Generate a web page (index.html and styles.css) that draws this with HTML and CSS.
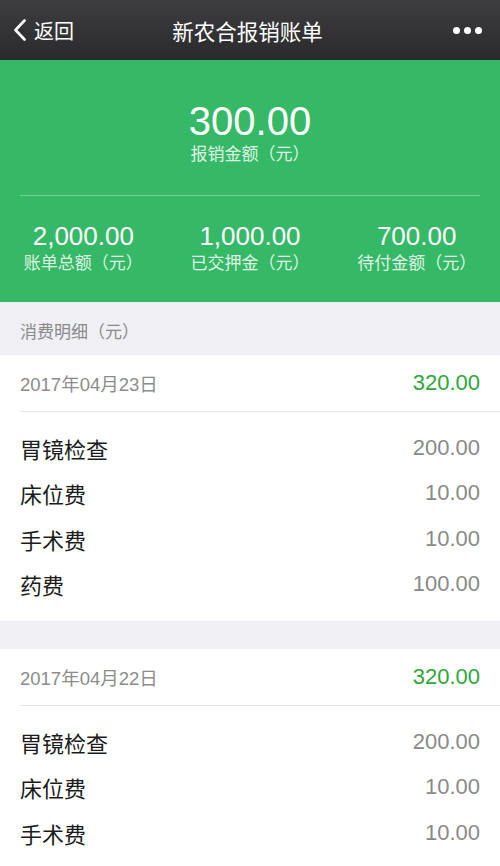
FILE: index.html
```html
<!DOCTYPE html>
<html lang="zh-CN">
<head>
<meta charset="utf-8">
<title>新农合报销账单</title>
<link rel="stylesheet" href="styles.css">
</head>
<body>
<div class="page">
  <header class="nav">
    <div class="nav-back">
      <svg class="chev" width="14" height="22" viewBox="0 0 14 22"><path d="M11.5 1.5 L2.5 11 L11.5 20.5" fill="none" stroke="#fff" stroke-width="2.6" stroke-linecap="round" stroke-linejoin="round"/></svg>
      <span>返回</span>
    </div>
    <div class="nav-title">新农合报销账单</div>
    <div class="nav-more"><i></i><i></i><i></i></div>
  </header>

  <section class="summary">
    <div class="main">
      <div class="main-num">300.00</div>
      <div class="main-label">报销金额（元）</div>
    </div>
    <div class="divider"></div>
    <div class="cols">
      <div class="col"><div class="col-num">2,000.00</div><div class="col-label">账单总额（元）</div></div>
      <div class="col"><div class="col-num">1,000.00</div><div class="col-label">已交押金（元）</div></div>
      <div class="col"><div class="col-num">700.00</div><div class="col-label">待付金额（元）</div></div>
    </div>
  </section>

  <div class="sec-head">消费明细（元）</div>

  <section class="card">
    <div class="day"><span class="date">2017年04月23日</span><span class="total">320.00</span></div>
    <div class="items">
      <div class="item"><span class="name">胃镜检查</span><span class="amt">200.00</span></div>
      <div class="item"><span class="name">床位费</span><span class="amt">10.00</span></div>
      <div class="item"><span class="name">手术费</span><span class="amt">10.00</span></div>
      <div class="item"><span class="name">药费</span><span class="amt">100.00</span></div>
    </div>
  </section>

  <div class="gap"></div>

  <section class="card">
    <div class="day"><span class="date">2017年04月22日</span><span class="total">320.00</span></div>
    <div class="items">
      <div class="item"><span class="name">胃镜检查</span><span class="amt">200.00</span></div>
      <div class="item"><span class="name">床位费</span><span class="amt">10.00</span></div>
      <div class="item"><span class="name">手术费</span><span class="amt">10.00</span></div>
    </div>
  </section>
</div>
</body>
</html>
```

FILE: styles.css
```css
html, body {
  margin: 0;
  padding: 0;
}
body {
  background: #efeff4;
  font-family: "Liberation Sans", "Noto Sans CJK SC", sans-serif;
  width: 500px;
  height: 866px;
  overflow: hidden;
}
.page {
  width: 500px;
}
.nav {
  height: 60px;
  background: linear-gradient(#3e3e40, #2a2a2c);
  display: flex;
  align-items: center;
  justify-content: space-between;
  color: #fff;
  padding: 0 18px 0 13px;
  box-sizing: border-box;
}
.nav-back {
  display: flex;
  align-items: center;
  gap: 7px;
  font-size: 20px;
  width: 100px;
}
.chev {
  display: block;
}
.nav-title {
  font-size: 21.5px;
  text-align: center;
  flex: 1;
}
.nav-more {
  width: 100px;
  display: flex;
  justify-content: flex-end;
  gap: 4px;
}
.nav-more i {
  width: 7px;
  height: 7px;
  border-radius: 50%;
  background: #fff;
  display: block;
}
.summary {
  background: #35b966;
  height: 242px;
  color: #fff;
  display: flex;
  flex-direction: column;
  box-sizing: border-box;
  padding-top: 38px;
}
.main {
  text-align: center;
  height: 97px;
}
.main-num {
  font-size: 40px;
  line-height: 46px;
}
.main-label {
  font-size: 17px;
  line-height: 22px;
  color: rgba(255,255,255,0.85);
}
.divider {
  height: 1px;
  margin: 0 20px;
  background: rgba(255,255,255,0.3);
}
.cols {
  display: grid;
  grid-template-columns: 1fr 1fr 1fr;
  padding-top: 24px;
  text-align: center;
}
.col-num {
  font-size: 26px;
  line-height: 32px;
}
.col-label {
  font-size: 17px;
  line-height: 24px;
  color: rgba(255,255,255,0.85);
}
.sec-head {
  height: 53px;
  line-height: 62px;
  padding-left: 20px;
  font-size: 17px;
  color: #8a8a8a;
  box-sizing: border-box;
  overflow: hidden;
}
.card {
  background: #fff;
  padding-left: 20px;
}
.day {
  height: 57px;
  display: flex;
  justify-content: space-between;
  align-items: center;
  padding-right: 20px;
  border-bottom: 1px solid #e6e6e6;
  box-sizing: border-box;
}
.date {
  font-size: 18.5px;
  color: #8c8c8c;
}
.total {
  font-size: 22px;
  color: #2ea73a;
}
.items {
  padding: 13px 20px 14px 0;
}
.item {
  height: 45.5px;
  display: flex;
  justify-content: space-between;
  align-items: center;
}
.name {
  font-size: 22px;
  color: #1c1c1c;
}
.amt {
  font-size: 22px;
  color: #8a8a8a;
}
.gap {
  height: 28px;
}
```
